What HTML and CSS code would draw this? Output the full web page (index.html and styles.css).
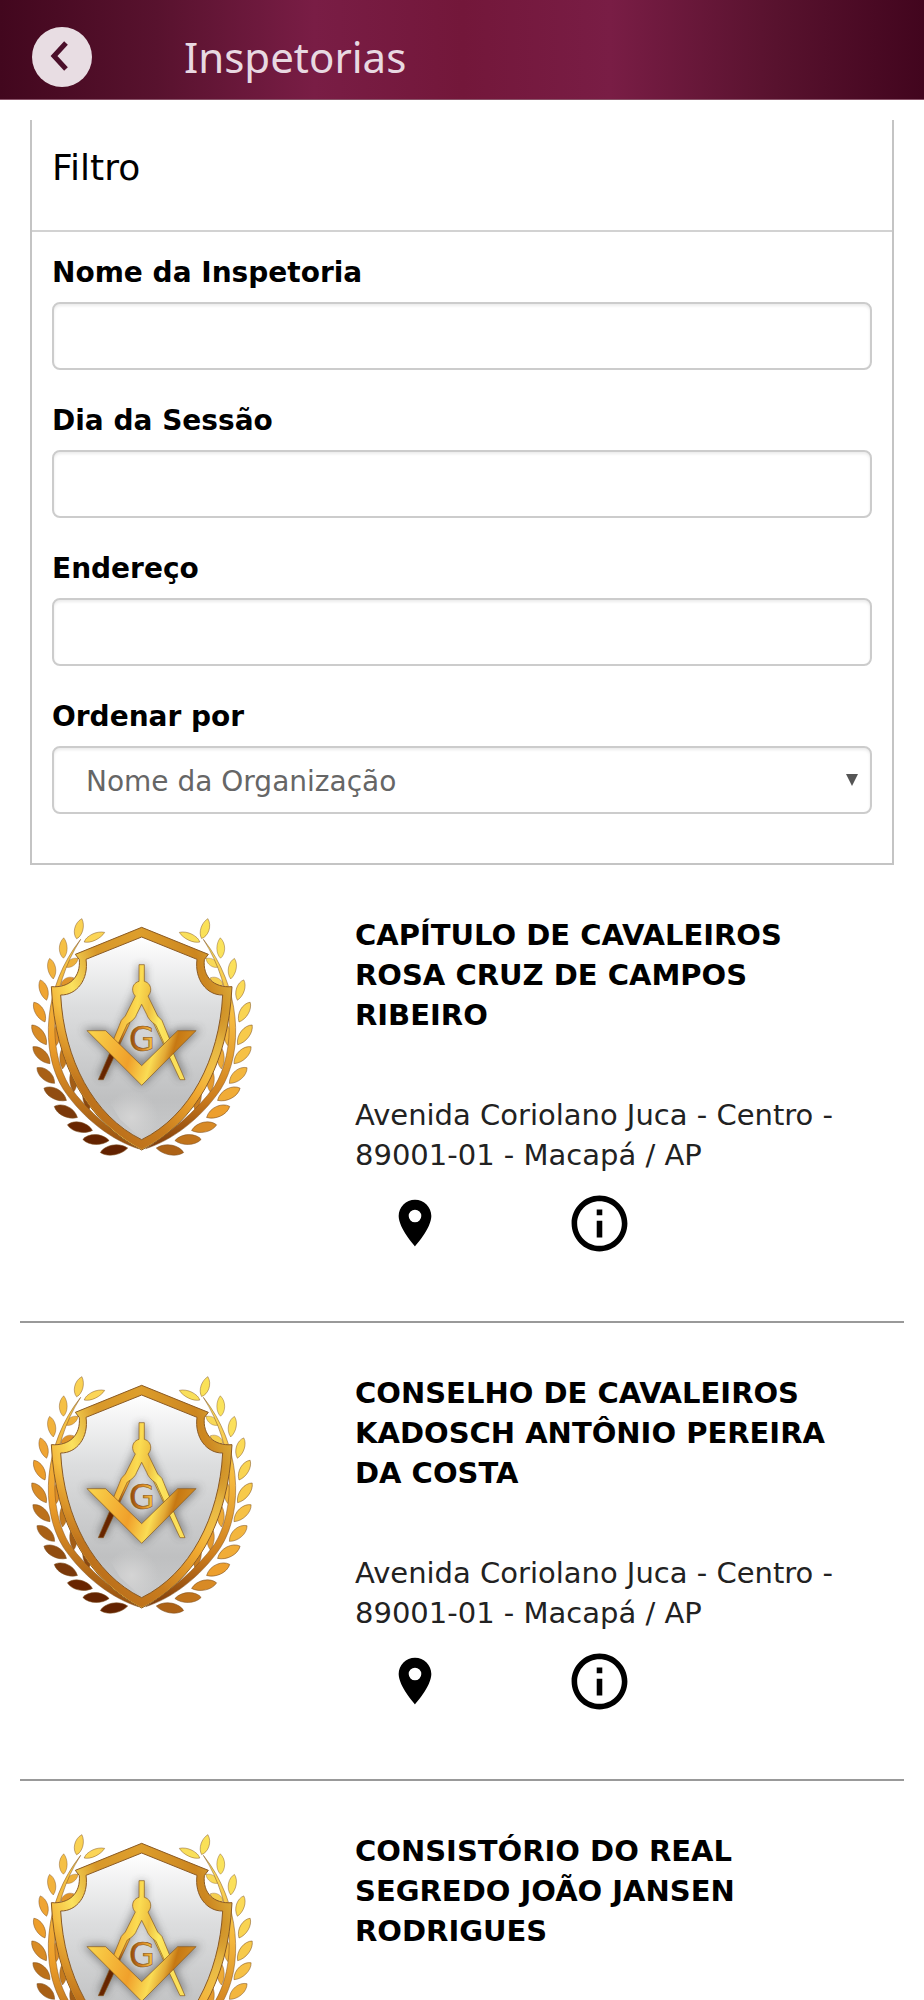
FILE: index.html
```html
<!DOCTYPE html>
<html lang="pt-BR">
<head>
<meta charset="utf-8">
<meta name="viewport" content="width=device-width, initial-scale=1">
<title>Inspetorias</title>
<link rel="stylesheet" href="styles.css">
</head>
<body>
<svg class="sprite" aria-hidden="true">
  <defs>
    <linearGradient id="gold-frame" gradientUnits="userSpaceOnUse" x1="94" y1="400" x2="636" y2="220">
      <stop offset="0" stop-color="#f0a42c"/><stop offset=".18" stop-color="#fbe25e"/><stop offset=".36" stop-color="#d8982a"/>
      <stop offset=".6" stop-color="#dd9e2c"/><stop offset=".85" stop-color="#cc8620"/><stop offset="1" stop-color="#dcae3a"/>
    </linearGradient>
    <linearGradient id="gold-lower" gradientUnits="userSpaceOnUse" x1="200" y1="720" x2="636" y2="300">
      <stop offset="0" stop-color="#b4691a"/><stop offset=".3" stop-color="#c87c1e"/><stop offset=".55" stop-color="#f0a830"/>
      <stop offset=".82" stop-color="#fce566"/><stop offset="1" stop-color="#d19a2b"/>
    </linearGradient>
    <linearGradient id="fade" x1="0" y1="0" x2="0" y2="1">
      <stop offset=".35" stop-color="#fff" stop-opacity="0"/><stop offset=".7" stop-color="#fff"/>
    </linearGradient>
    <mask id="lower-mask" maskUnits="userSpaceOnUse" x="30" y="50" width="672" height="726">
      <rect x="30" y="84" width="672" height="670" fill="url(#fade)"/>
    </mask>
    <linearGradient id="silver" x1="0" y1="0" x2="0" y2="1">
      <stop offset="0" stop-color="#fff"/><stop offset=".35" stop-color="#dcddde"/><stop offset=".8" stop-color="#bfc0c1"/><stop offset="1" stop-color="#c9cacb"/>
    </linearGradient>
    <radialGradient id="shine" gradientUnits="userSpaceOnUse" cx="335" cy="655" r="80">
      <stop offset="0" stop-color="#d4d4d4"/><stop offset="1" stop-color="#d4d4d4" stop-opacity="0"/>
    </radialGradient>
    <linearGradient id="stem-left" x1="0" y1="0" x2="0" y2="1">
      <stop offset="0" stop-color="#f6cb4c"/><stop offset=".5" stop-color="#ee9f2b"/><stop offset="1" stop-color="#96500f"/>
    </linearGradient>
    <linearGradient id="stem-right" x1="0" y1="0" x2="0" y2="1">
      <stop offset="0" stop-color="#fbe060"/><stop offset=".4" stop-color="#f5b83e"/><stop offset=".75" stop-color="#cf7f1e"/><stop offset="1" stop-color="#7d3a0a"/>
    </linearGradient>
    <linearGradient id="leg-left" gradientUnits="userSpaceOnUse" x1="380" y1="250" x2="240" y2="540">
      <stop offset="0" stop-color="#d39a28"/><stop offset=".25" stop-color="#fbdc52"/><stop offset=".5" stop-color="#e8962a"/><stop offset=".66" stop-color="#7c3608"/><stop offset=".75" stop-color="#672500"/>
    </linearGradient>
    <linearGradient id="compass-gold" gradientUnits="userSpaceOnUse" x1="300" y1="330" x2="440" y2="350">
      <stop offset="0" stop-color="#f5b83c"/><stop offset=".35" stop-color="#fbdc52"/><stop offset=".6" stop-color="#eebf40"/><stop offset=".85" stop-color="#fdea60"/><stop offset="1" stop-color="#fbe05a"/>
    </linearGradient>
    <linearGradient id="square" gradientUnits="userSpaceOnUse" x1="230" y1="360" x2="500" y2="440">
      <stop offset="0" stop-color="#f9d049"/><stop offset=".45" stop-color="#f0a02b"/><stop offset=".68" stop-color="#fadc54"/><stop offset=".8" stop-color="#e3a935"/><stop offset=".88" stop-color="#c67813"/><stop offset="1" stop-color="#cf861d"/>
    </linearGradient>
    <linearGradient id="letter" x1="0" y1="0" x2="1" y2="0">
      <stop offset="0" stop-color="#8b4209"/><stop offset=".5" stop-color="#d98522"/><stop offset="1" stop-color="#fbd64f"/>
    </linearGradient>
    <filter id="glow" x="-20%" y="-20%" width="140%" height="140%"><feGaussianBlur stdDeviation="12"/></filter>
    <path id="leaf" d="M-34 2C-22-19 14-24 34 0C16 19-18 21-34 2Z"/>
    <path id="stem" d="M182 120C70 260 58 455 130 570C190 660 280 725 355 748C290 705 205 640 148 560C84 455 86 270 182 120Z"/>
    <symbol id="emblem" viewBox="30 50 672 726">
      <g stroke="#7d4f20" stroke-width="2" stroke-opacity=".75">
        <g>
          <use href="#leaf" transform="translate(156 190) rotate(-34) scale(.65)" fill="#edb03a"/>
          <use href="#leaf" transform="translate(142 246) rotate(-28) scale(.65)" fill="#e0942a"/>
          <use href="#leaf" transform="translate(103 330) rotate(85) scale(.8 .6)" fill="#eba235"/>
          <use href="#leaf" transform="translate(110 408) rotate(92) scale(.9 .6)" fill="#dd8d26"/>
          <use href="#leaf" transform="translate(130 475) rotate(94) scale(1 .7)" fill="#c47a1d"/>
          <use href="#leaf" transform="translate(160 544) rotate(88) scale(1 .7)" fill="#a35d15"/>
          <use href="#leaf" transform="translate(200 600) rotate(80) scale(1 .7)" fill="#8b470e"/>
          <use href="#leaf" transform="translate(177 88) rotate(-74) scale(.92 .8)" fill="#fad253"/>
          <use href="#leaf" transform="translate(223 113) rotate(-24) scale(1 .65)" fill="#fbd558"/>
          <use href="#leaf" transform="translate(130 146) rotate(-88) scale(.9 .75)" fill="#f5c045"/>
          <use href="#leaf" transform="translate(95 208) rotate(81) scale(.92 .75)" fill="#f2b33c"/>
          <use href="#leaf" transform="translate(71 272) rotate(74) scale(.94 .78)" fill="#efa534"/>
          <use href="#leaf" transform="translate(59 338) rotate(62) scale(1 .84)" fill="#ed9e2b"/>
          <use href="#leaf" transform="translate(58 406) rotate(55) scale(1.08 .9)" fill="#d98c26"/>
          <use href="#leaf" transform="translate(65 467) rotate(46) scale(1.06 .92)" fill="#bc711b"/>
          <use href="#leaf" transform="translate(78 528) rotate(43) scale(1.04 .95)" fill="#a86016"/>
          <use href="#leaf" transform="translate(106 584) rotate(30) scale(1.13 1)" fill="#914d11"/>
          <use href="#leaf" transform="translate(138 637) rotate(27) scale(1.13 1)" fill="#7b390a"/>
          <use href="#leaf" transform="translate(180 684) rotate(14) scale(1.13 .95)" fill="#682500"/>
          <use href="#leaf" transform="translate(228 721) rotate(4) scale(1.16 .95)" fill="#642300"/>
          <use href="#leaf" transform="translate(282 752) rotate(-8) scale(1.22 .95)" fill="#632200"/>
          <use href="#stem" fill="url(#stem-left)"/>
        </g>
        <g transform="translate(732 0) scale(-1 1)">
          <use href="#leaf" transform="translate(156 190) rotate(-34) scale(.65)" fill="#f8d958"/>
          <use href="#leaf" transform="translate(142 246) rotate(-28) scale(.65)" fill="#f5cf50"/>
          <use href="#leaf" transform="translate(103 330) rotate(85) scale(.8 .6)" fill="#f3c246"/>
          <use href="#leaf" transform="translate(110 408) rotate(92) scale(.9 .6)" fill="#f1b53e"/>
          <use href="#leaf" transform="translate(130 475) rotate(94) scale(1 .7)" fill="#eeaa36"/>
          <use href="#leaf" transform="translate(160 544) rotate(88) scale(1 .7)" fill="#e59a2d"/>
          <use href="#leaf" transform="translate(200 600) rotate(80) scale(1 .7)" fill="#c97c1f"/>
          <use href="#leaf" transform="translate(177 88) rotate(-106) scale(.92 .8)" fill="#fae158"/>
          <use href="#leaf" transform="translate(223 113) rotate(-24) scale(1 .65)" fill="#f9df5b"/>
          <use href="#leaf" transform="translate(130 146) rotate(-88) scale(.9 .75)" fill="#fae35c"/>
          <use href="#leaf" transform="translate(95 208) rotate(81) scale(.92 .75)" fill="#fbe05b"/>
          <use href="#leaf" transform="translate(71 272) rotate(74) scale(.94 .78)" fill="#fbda57"/>
          <use href="#leaf" transform="translate(59 338) rotate(62) scale(1 .84)" fill="#f9d452"/>
          <use href="#leaf" transform="translate(58 406) rotate(55) scale(1.08 .9)" fill="#f7ca4b"/>
          <use href="#leaf" transform="translate(65 467) rotate(46) scale(1.06 .92)" fill="#f6c146"/>
          <use href="#leaf" transform="translate(78 528) rotate(43) scale(1.04 .95)" fill="#f3b63e"/>
          <use href="#leaf" transform="translate(106 584) rotate(30) scale(1.13 1)" fill="#f1ac37"/>
          <use href="#leaf" transform="translate(138 637) rotate(27) scale(1.13 1)" fill="#ed9f2d"/>
          <use href="#leaf" transform="translate(180 684) rotate(14) scale(1.13 .95)" fill="#d88a25"/>
          <use href="#leaf" transform="translate(228 721) rotate(4) scale(1.16 .95)" fill="#c0731b"/>
          <use href="#leaf" transform="translate(282 752) rotate(-8) scale(1.22 .95)" fill="#ad6216"/>
          <use href="#stem" fill="url(#stem-right)"/>
        </g>
      </g>
      <g stroke="#8a5a24" stroke-width="3">
        <path fill="url(#gold-frame)" d="M365 84L565 165L553 181C548 232 580 266 636 262C625 500 525 670 365 752C205 670 105 500 94 262C150 266 182 232 178 181L166 165Z"/>
        <path fill="url(#gold-lower)" stroke="none" mask="url(#lower-mask)" d="M634 264C623 500 524 668 365 750C206 668 107 500 96 264Z"/>
        <path fill="url(#silver)" d="M365 113L531 180C523 240 560 288 608 287C598 480 510 650 365 721C220 650 132 480 122 287C170 288 207 240 198 180Z"/>
      </g>
      <path fill="url(#shine)" d="M240 560H440L430 660L365 718L300 660Z"/>
      <g fill="none" stroke="#444" stroke-width="22" opacity=".6" filter="url(#glow)">
        <path d="M365 200V260L245 535M365 260L487 535M215 400H256L365 505L473 400H515L365 545Z"/>
      </g>
      <g stroke="#85561c" stroke-width="2">
        <path fill="url(#leg-left)" d="M308 370L235 541L250 541L330 370Z"/>
        <path fill="#fbe05a" d="M400 370L480 541L495 541L420 370Z"/>
        <path fill="url(#compass-gold)" d="M357 196H373V246C387 250 393 261 392 273C391 281 388 286 384 290L413 350Q429 362 432 378L450 422L434 436L408 378Q384 360 380 345L365 315L350 345Q346 360 322 374L294 434L280 422L298 378Q301 362 316 350L346 290C342 286 339 281 338 273C337 261 343 250 357 246Z"/>
        <path fill="url(#square)" d="M201 394H257L365 499L473 394H528L365 558Z"/>
        <text class="emblem-letter" x="366" y="456" text-anchor="middle" fill="url(#letter)">G</text>
      </g>
    </symbol>
    <symbol id="icon-pin" viewBox="0 0 24 24">
      <path d="M12 2C8.130 2 5 5.130 5 9c0 5.250 7 13 7 13s7-7.750 7-13c0-3.870-3.130-7-7-7zm0 9.700a2.700 2.700 0 1 1 0-5.400 2.700 2.700 0 0 1 0 5.400z"/>
    </symbol>
    <symbol id="icon-info" viewBox="0 0 24 24">
      <path d="M11 17h2v-6h-2v6zm1-15C6.480 2 2 6.480 2 12s4.480 10 10 10 10-4.480 10-10S17.520 2 12 2zm0 18c-4.410 0-8-3.590-8-8s3.590-8 8-8 8 3.590 8 8-3.590 8-8 8zM11 9h2V7h-2v2z"/>
    </symbol>
  </defs>
</svg>

<header class="topbar">
  <button class="back" type="button" aria-label="Voltar">
    <svg viewBox="0 0 60 60" aria-hidden="true"><path d="M34 16L22 29L34 42"/></svg>
  </button>
  <h1 class="topbar-title">Inspetorias</h1>
</header>

<main>
  <form class="filter">
    <h2 class="filter-title">Filtro</h2>
    <div class="filter-body">
      <div class="field">
        <label for="nome">Nome da Inspetoria</label>
        <input class="control" id="nome" type="text">
      </div>
      <div class="field">
        <label for="dia">Dia da Sessão</label>
        <input class="control" id="dia" type="text">
      </div>
      <div class="field">
        <label for="endereco">Endereço</label>
        <input class="control" id="endereco" type="text">
      </div>
      <div class="field">
        <label for="ordem">Ordenar por</label>
        <div class="select">
          <select class="control" id="ordem"><option>Nome da Organização</option></select>
        </div>
      </div>
    </div>
  </form>

  <ul class="list">
    <li class="item">
      <svg class="emblem" aria-hidden="true"><use href="#emblem"/></svg>
      <div class="info">
        <h3 class="name">CAPÍTULO DE CAVALEIROS ROSA CRUZ DE CAMPOS RIBEIRO</h3>
        <p class="address">Avenida Coriolano Juca - Centro - 89001-01 - Macapá / AP</p>
        <div class="actions">
          <button class="action" type="button" aria-label="Mapa"><svg class="pin"><use href="#icon-pin"/></svg></button>
          <button class="action" type="button" aria-label="Informações"><svg class="about"><use href="#icon-info"/></svg></button>
        </div>
      </div>
    </li>
    <li class="item">
      <svg class="emblem" aria-hidden="true"><use href="#emblem"/></svg>
      <div class="info">
        <h3 class="name">CONSELHO DE CAVALEIROS KADOSCH ANTÔNIO PEREIRA DA COSTA</h3>
        <p class="address">Avenida Coriolano Juca - Centro - 89001-01 - Macapá / AP</p>
        <div class="actions">
          <button class="action" type="button" aria-label="Mapa"><svg class="pin"><use href="#icon-pin"/></svg></button>
          <button class="action" type="button" aria-label="Informações"><svg class="about"><use href="#icon-info"/></svg></button>
        </div>
      </div>
    </li>
    <li class="item">
      <svg class="emblem" aria-hidden="true"><use href="#emblem"/></svg>
      <div class="info">
        <h3 class="name">CONSISTÓRIO DO REAL SEGREDO JOÃO JANSEN RODRIGUES</h3>
      </div>
    </li>
  </ul>
</main>
</body>
</html>
```
FILE: styles.css
```css
* { box-sizing: border-box; }

body {
  margin: 0;
  background: #fff;
  color: #000;
  font-family: Verdana, "DejaVu Sans", sans-serif;
  font-size: 28px;
  line-height: 40px;
}

h1, h2, h3, p, ul { margin: 0; padding: 0; font-weight: normal; }

.sprite { position: absolute; width: 0; height: 0; }

.topbar {
  display: flex;
  align-items: center;
  gap: 92px;
  height: 100px;
  padding: 14px 32px 0;
  background: linear-gradient(90deg, #42071e 0%, #58122e 17%, #791d45 34%, #73173a 50%, #791d45 66%, #58122e 84%, #42051e 100%);
  border-bottom: 1px solid #8a5369;
}

.back {
  width: 60px;
  height: 60px;
  padding: 0;
  border: 0;
  border-radius: 50%;
  background: #e8dde3;
}

.back svg { display: block; fill: none; stroke: #4b0f2a; stroke-width: 5; }

.topbar-title {
  color: #e8d9e1;
  font-family: "Noto Sans", sans-serif;
  font-size: 42px;
  line-height: 60px;
}

.filter {
  margin: 20px 30px 0;
  border: 2px solid #c4c4c4;
  border-top: 0;
}

.filter-title {
  padding: 26px 20px 40px;
  border-bottom: 2px solid #d2d2d2;
  font-size: 36px;
  line-height: 44px;
}

.filter-body {
  display: grid;
  gap: 30px;
  padding: 21px 20px 49px;
}

.field { display: grid; gap: 9px; }

.field + .field { padding-top: 1px; }

.field label { font-weight: bold; }

.control {
  width: 100%;
  height: 68px;
  padding: 0 32px;
  border: 2px solid #ccc;
  border-radius: 8px;
  background: #fff;
  box-shadow: inset 0 2px 3px rgba(0, 0, 0, .08);
  color: #666;
  font: inherit;
  appearance: none;
}

select.control { padding-top: 4px; }

.select { display: grid; align-items: center; }
.select > *, .select::after { grid-area: 1 / 1; }

.select::after {
  content: "";
  justify-self: end;
  margin-right: 14px;
  border: 6px solid transparent;
  border-top: 12px solid #555;
  border-bottom: 0;
  pointer-events: none;
}

.list { padding: 0 20px; list-style: none; }

.item {
  display: grid;
  grid-template-columns: 325px 1fr;
  min-height: 458px;
  padding: 50px 60px 50px 10px;
  border-bottom: 2px solid #999;
}

.emblem { width: 224px; height: 242px; margin-top: 1px; }

.emblem-letter { font: 100px "DejaVu Sans", sans-serif; }

.name {
  font-size: 29px;
  font-weight: bold;
}

.address {
  margin-top: 60px;
  color: #222;
  font-size: 29px;
}

.actions {
  display: flex;
  gap: 64px;
  padding-top: 4px;
}

.action {
  display: grid;
  place-items: center;
  width: 120px;
  height: 88px;
  padding: 0;
  border: 0;
  background: none;
}

.pin { width: 56px; height: 56px; }
.about { width: 67px; height: 67px; }
```
